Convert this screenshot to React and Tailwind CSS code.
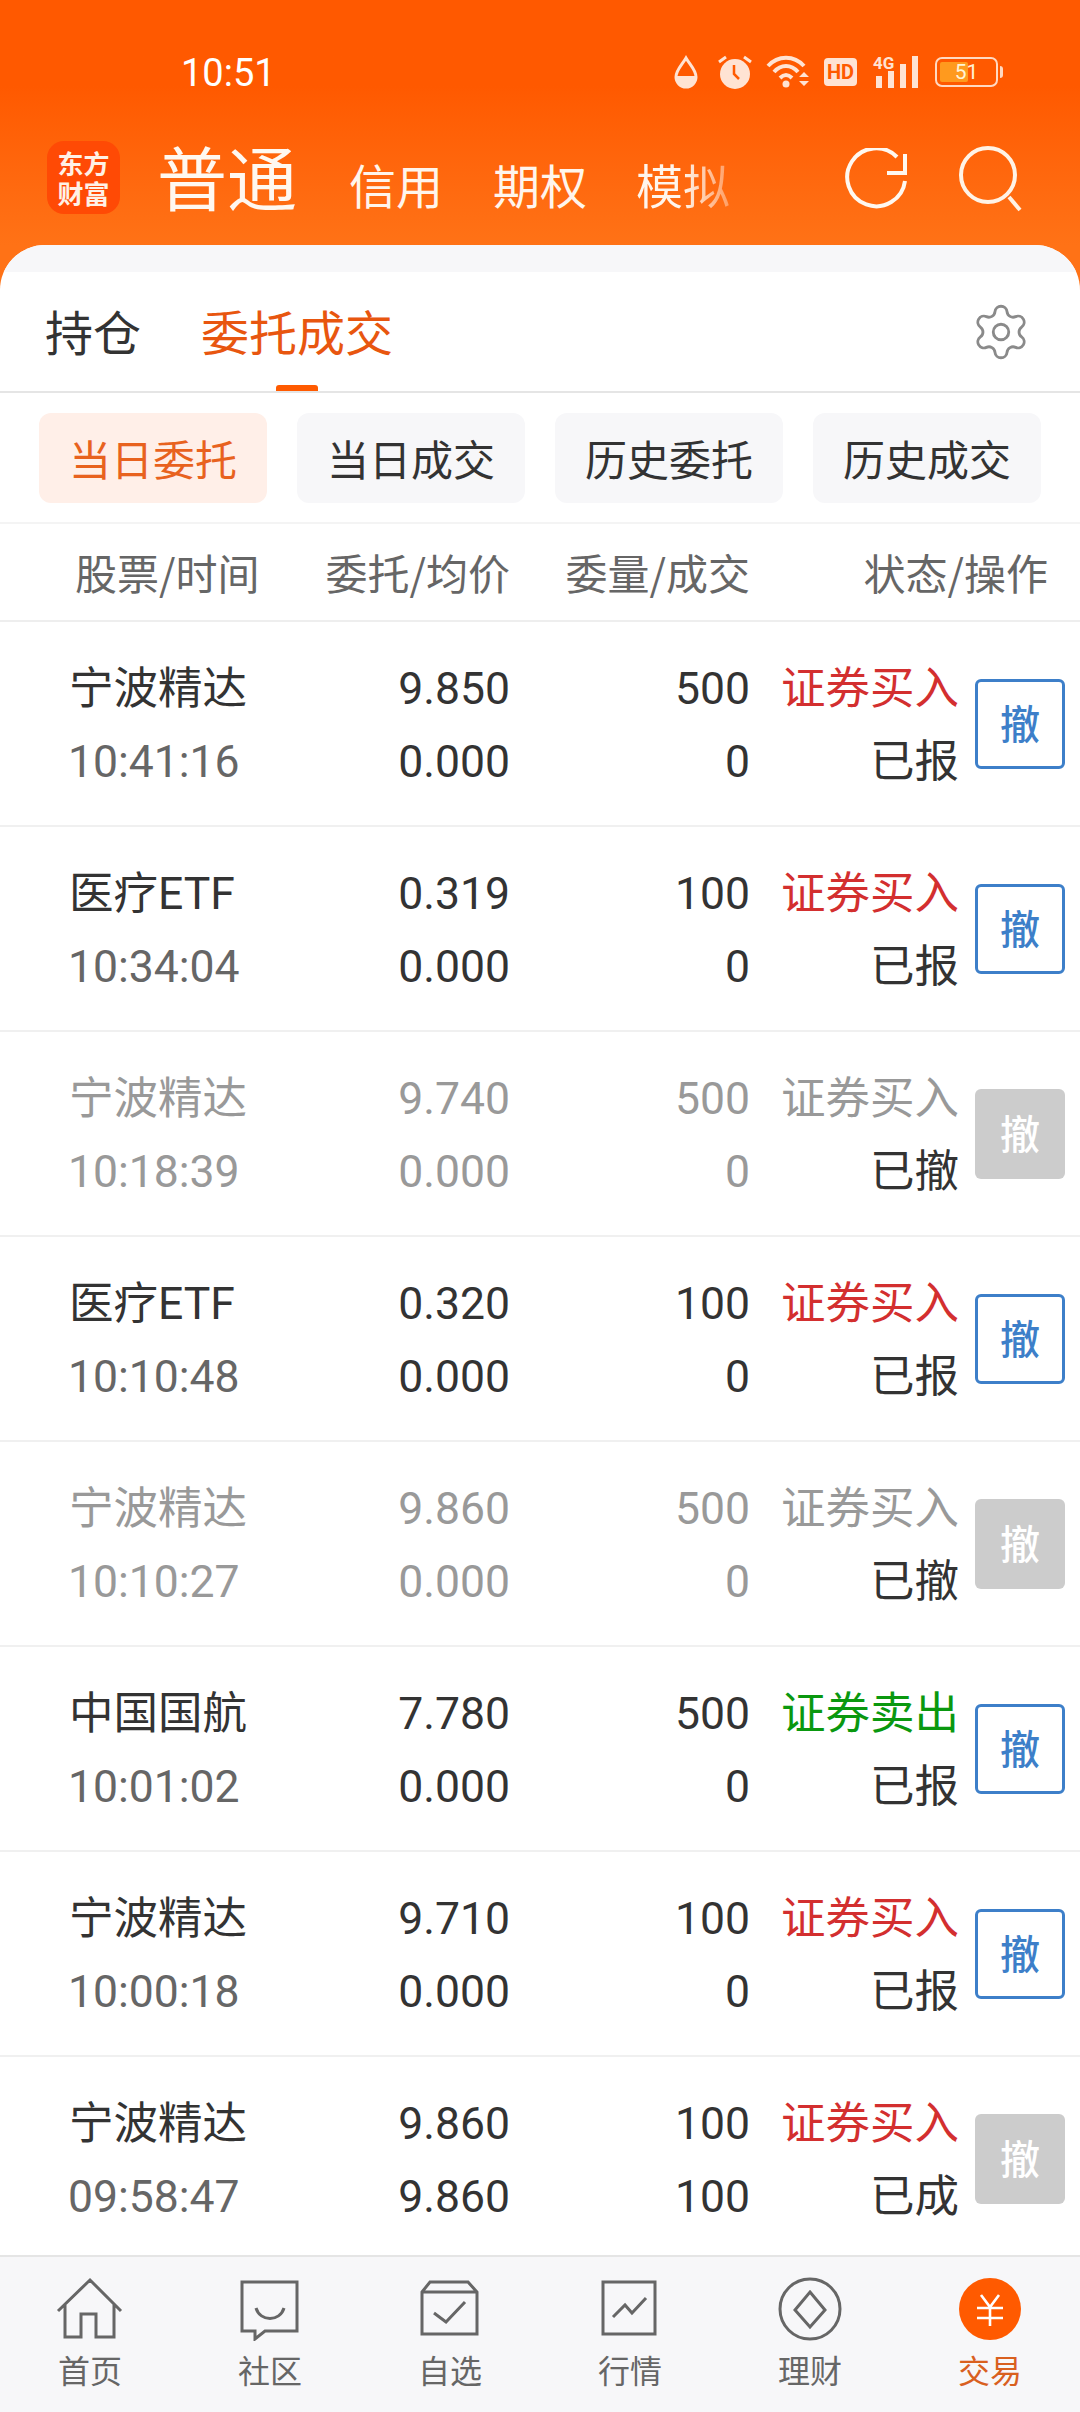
import React from 'react';
import { Settings } from 'lucide-react';

const ORDERS = [
  { name: '宁波精达', time: '10:41:16', price: '9.850', avg: '0.000', qty: '500', done: '0', side: '证券买入', state: '已报' },
  { name: '医疗ETF', time: '10:34:04', price: '0.319', avg: '0.000', qty: '100', done: '0', side: '证券买入', state: '已报' },
  { name: '宁波精达', time: '10:18:39', price: '9.740', avg: '0.000', qty: '500', done: '0', side: '证券买入', state: '已撤', off: true },
  { name: '医疗ETF', time: '10:10:48', price: '0.320', avg: '0.000', qty: '100', done: '0', side: '证券买入', state: '已报' },
  { name: '宁波精达', time: '10:10:27', price: '9.860', avg: '0.000', qty: '500', done: '0', side: '证券买入', state: '已撤', off: true },
  { name: '中国国航', time: '10:01:02', price: '7.780', avg: '0.000', qty: '500', done: '0', side: '证券卖出', state: '已报' },
  { name: '宁波精达', time: '10:00:18', price: '9.710', avg: '0.000', qty: '100', done: '0', side: '证券买入', state: '已报' },
  { name: '宁波精达', time: '09:58:47', price: '9.860', avg: '9.860', qty: '100', done: '100', side: '证券买入', state: '已成', filled: true }
];

const CHIPS = ['当日委托', '当日成交', '历史委托', '历史成交'];

function StatusIcons() {
  return (
    <div className="flex items-center text-[#ffe3d3]">
      <svg width="26" height="34" viewBox="0 0 26 34">
        <path d="M13 3 C9 10 3 15 3 22 a10 10 0 0 0 20 0 C23 15 17 10 13 3Z" fill="none" stroke="currentColor" strokeWidth="3" />
        <path d="M3 21 h20 v2 a10 10 0 0 1-20 0Z" fill="currentColor" />
      </svg>
      <svg width="36" height="36" viewBox="0 0 36 36" className="ml-[18px]">
        <circle cx="18" cy="20" r="15" fill="currentColor" />
        <path d="M17 11 v9 l5 5" fill="none" stroke="#ff5a00" strokeWidth="2.5" />
        <path d="M2 8 L9 3 M34 8 L27 3" stroke="currentColor" strokeWidth="3" />
      </svg>
      <svg width="44" height="34" viewBox="0 0 44 34" className="ml-[13px]">
        <path d="M2 11 C12 0 28 0 38 11" fill="none" stroke="currentColor" strokeWidth="4" />
        <path d="M8 17 C15 9 25 9 32 17" fill="none" stroke="currentColor" strokeWidth="4" />
        <path d="M14 23 C18 19 22 19 26 23" fill="none" stroke="currentColor" strokeWidth="4" />
        <circle cx="20" cy="29" r="3.5" fill="currentColor" />
        <path d="M33 22 L38 17 L43 22Z M33 26 L43 26 L38 31Z" fill="currentColor" />
      </svg>
      <div className="ml-[14px] w-[33px] h-[28px] rounded-[4px] bg-[#ffe3d3] flex items-center justify-center font-['Roboto'] font-bold text-[20px] leading-none text-[#ff5a00]">
        HD
      </div>
      <div className="relative ml-[16px] w-[46px] h-[32px]">
        <span className="absolute left-0 -top-[1px] font-['Roboto'] font-bold text-[17px] leading-none">4G</span>
        <svg width="46" height="32" viewBox="0 0 46 32" className="absolute left-0 top-0">
          <rect x="3" y="20" width="6" height="12" fill="currentColor" />
          <rect x="15" y="15" width="6" height="17" fill="currentColor" />
          <rect x="27" y="8" width="6" height="24" fill="currentColor" />
          <rect x="39" y="0" width="6" height="32" fill="currentColor" />
        </svg>
      </div>
      <div className="relative ml-[16px] w-[63px] h-[30px] rounded-[7px] border-2 border-[#ffd9c2] overflow-hidden">
        <div className="absolute left-[3px] top-[3px] bottom-[3px] w-[28px] rounded-[2px] bg-[#ff9a1e]" />
        <div className="absolute inset-0 flex items-center justify-center font-['Roboto'] text-[21px] leading-none text-[#fff3d6]">51</div>
      </div>
      <div className="ml-[2px] w-[3px] h-[12px] rounded-r-sm bg-[#ffd9c2]" />
    </div>
  );
}

function TopBar() {
  return (
    <div className="h-[245px] bg-gradient-to-b from-[#ff5900] from-35% to-[#ff7216]">
      <div className="h-[141px] flex items-start justify-between pt-[54px] pr-[77px] pl-[181px]">
        <span className="font-['Roboto'] text-[38px] leading-[38px] text-white">10:51</span>
        <StatusIcons />
      </div>
      <div className="flex items-start pl-[47px]">
        <div className="w-[73px] h-[73px] rounded-[17px] bg-[#ff4a05] flex flex-col items-center justify-center font-['Noto_Sans_CJK_SC'] font-bold text-[26px] leading-[30px] text-[#fff1e6]">
          <span>东方</span>
          <span>财富</span>
        </div>
        <span className="ml-[37px] -mt-[10px] font-['Noto_Sans_CJK_SC'] text-[70px] leading-[90px] text-[#fff8f0]">普通</span>
        <span className="ml-[52px] mt-[13px] w-[94px] font-['Noto_Sans_CJK_SC'] text-[47px] leading-[60px] whitespace-nowrap text-[#fff5ec]">信用</span>
        <span className="ml-[50px] mt-[13px] w-[94px] font-['Noto_Sans_CJK_SC'] text-[47px] leading-[60px] whitespace-nowrap text-[#fff5ec]">期权</span>
        <span className="ml-[49px] mt-[13px] w-[94px] font-['Noto_Sans_CJK_SC'] text-[47px] leading-[60px] whitespace-nowrap bg-gradient-to-r from-[#fff5ec] from-50% to-[#ffffff55] bg-clip-text text-transparent">模拟</span>
        <svg width="64" height="64" viewBox="0 0 64 64" className="ml-[115px] mt-[7px]">
          <path d="M52 9 A29 29 0 1 0 60 33" fill="none" stroke="#fff8f0" strokeWidth="4" />
          <path d="M60 6 V25 H42" fill="none" stroke="#fff8f0" strokeWidth="4" />
        </svg>
        <svg width="66" height="68" viewBox="0 0 66 68" className="ml-[50px] mt-[4px]">
          <circle cx="29" cy="30" r="27" fill="none" stroke="#fff3e6" strokeWidth="4" />
          <path d="M50 52 L61 65" stroke="#fff3e6" strokeWidth="4" />
        </svg>
      </div>
    </div>
  );
}

function Tabs() {
  return (
    <div className="relative h-[121px] flex items-center pl-[45px] pr-[48px] pb-[3px] border-b-2 border-[#e5e5e5] font-['Noto_Sans_CJK_SC'] text-[48px] leading-[60px]">
      <span className="text-[#333]">持仓</span>
      <span className="ml-[60px] text-[#e8560f]">委托成交</span>
      <Settings size={62} strokeWidth={1.1} className="ml-auto mt-[4px] text-[#8a8a8a]" />
      <div className="absolute left-[276px] bottom-0 w-[42px] h-[6px] rounded-t-[3px] bg-[#ff5a00]" />
    </div>
  );
}

function Chips() {
  return (
    <div className="h-[131px] pt-[20px] px-[39px] flex gap-[30px] border-b-2 border-[#f4f4f4]">
      {CHIPS.map((c, i) => (
        <div
          key={c}
          className={`h-[90px] flex-1 rounded-[12px] flex items-center justify-center font-['Noto_Sans_CJK_SC'] text-[42px] leading-none ${
            i === 0 ? 'bg-[#ffefe8] text-[#e8621e]' : 'bg-[#f7f7f9] text-[#333]'
          }`}
        >
          {c}
        </div>
      ))}
    </div>
  );
}

function ColumnHead() {
  return (
    <div className="h-[98px] flex items-center pl-[75px] pb-[1px] border-b-2 border-[#eeeeee] font-['Noto_Sans_CJK_SC'] text-[42px] leading-none whitespace-nowrap text-[#666]">
      <span className="w-[184px]">股票/时间</span>
      <span className="w-[251px] text-right">委托/均价</span>
      <span className="w-[240px] text-right">委量/成交</span>
      <span className="w-[298px] text-right">状态/操作</span>
    </div>
  );
}

function OrderRow({ order }) {
  const muted = order.off;
  const top = muted ? 'text-[#999]' : 'text-[#333]';
  let sideColor = 'text-[#d32f2f]';
  if (muted) sideColor = 'text-[#999]';
  else if (order.side === '证券卖出') sideColor = 'text-[#0a980f]';
  const inactive = order.off || order.filled;

  return (
    <div className="h-[205px] flex items-center pl-[69px] border-b-2 border-[#f0f0f0] font-['Roboto','Noto_Sans_CJK_SC',sans-serif] text-[44.5px] leading-[73px] whitespace-nowrap">
      <div className="w-[241px] pt-[5px]">
        <div className={top}>{order.name}</div>
        <div className={`-ml-[1px] ${muted ? 'text-[#999]' : 'text-[#666]'}`}>{order.time}</div>
      </div>
      <div className="w-[200px] pt-[5px] text-right">
        <div className={top}>{order.price}</div>
        <div className={top}>{order.avg}</div>
      </div>
      <div className="w-[240px] pt-[5px] text-right">
        <div className={top}>{order.qty}</div>
        <div className={top}>{order.done}</div>
      </div>
      <div className="w-[209px] pt-[5px] text-right">
        <div className={sideColor}>{order.side}</div>
        <div className="text-[#333]">{order.state}</div>
      </div>
      <div
        className={`ml-[16px] w-[90px] h-[90px] pt-[4px] rounded-[6px] flex items-center justify-center font-medium text-[40px] leading-none ${
          inactive ? 'bg-[#cccccc] text-white' : 'border-[3px] border-[#3d7fc9] text-[#3d7fc9]'
        }`}
      >
        撤
      </div>
    </div>
  );
}

const navStroke = { fill: 'none', stroke: '#666', strokeWidth: 3 };

function NavIcon({ kind }) {
  return (
    <svg width="72" height="64" viewBox="0 0 72 64">
      {kind === 'home' && (
        <path {...navStroke} d="M4 34 L36 3 L67 34 M11 27 V60 H27 V37 H42 V60 H60 V27" />
      )}
      {kind === 'chat' && (
        <>
          <path {...navStroke} d="M8 5 H63 V54 H31 L21 62 L21 54 H8Z" />
          <path {...navStroke} d="M22 31 C26 45 46 45 50 31" />
        </>
      )}
      {kind === 'watch' && (
        <>
          <path {...navStroke} d="M8 15 L16 5 H54 L63 15 V57 H8Z M8 15 H63" />
          <path {...navStroke} d="M20 36 L32 45 L51 25" />
        </>
      )}
      {kind === 'market' && (
        <>
          <path {...navStroke} d="M9 5 H61 V57 H9Z" />
          <path {...navStroke} d="M19 40 L31 28 L38 36 L52 21" />
        </>
      )}
      {kind === 'wealth' && (
        <>
          <circle {...navStroke} cx="36" cy="32" r="30" />
          <path {...navStroke} d="M36 15 L51 33 L36 50 L21 33Z" />
        </>
      )}
      {kind === 'trade' && (
        <>
          <circle cx="36" cy="32" r="31" fill="#ff5a00" />
          <path fill="none" stroke="#fff" strokeWidth="2.6" d="M27 18 L36 30 L45 18 M23 31 H49 M23 41 H49 M36 30 V49" />
        </>
      )}
    </svg>
  );
}

const NAV_ITEMS = [
  { label: '首页', kind: 'home' },
  { label: '社区', kind: 'chat' },
  { label: '自选', kind: 'watch' },
  { label: '行情', kind: 'market' },
  { label: '理财', kind: 'wealth' },
  { label: '交易', kind: 'trade', active: true }
];

function BottomNav() {
  return (
    <div className="h-[157px] grid grid-cols-6 border-t-2 border-[#e5e5e5] bg-[#f7f7f9] pt-[20px]">
      {NAV_ITEMS.map((item) => (
        <div key={item.label} className="flex flex-col items-center">
          <NavIcon kind={item.kind} />
          <span className={`mt-[6px] font-['Noto_Sans_CJK_SC'] text-[32px] leading-[44px] ${item.active ? 'text-[#d9601f]' : 'text-[#666]'}`}>
            {item.label}
          </span>
        </div>
      ))}
    </div>
  );
}

export default function App() {
  return (
    <div className="w-[1080px] h-[2412px] overflow-hidden flex flex-col bg-white font-['Noto_Sans_CJK_SC',sans-serif]">
      <TopBar />
      <div className="flex-1 min-h-0 bg-[#ff7216]">
        <div className="h-full flex flex-col rounded-t-[45px] overflow-hidden bg-white">
          <div className="h-[27px] bg-[#f7f7f9]" />
          <Tabs />
          <Chips />
          <ColumnHead />
          <div className="flex-1 min-h-0 overflow-hidden">
            {ORDERS.map((o, i) => (
              <OrderRow key={i} order={o} />
            ))}
          </div>
          <BottomNav />
        </div>
      </div>
    </div>
  );
}
